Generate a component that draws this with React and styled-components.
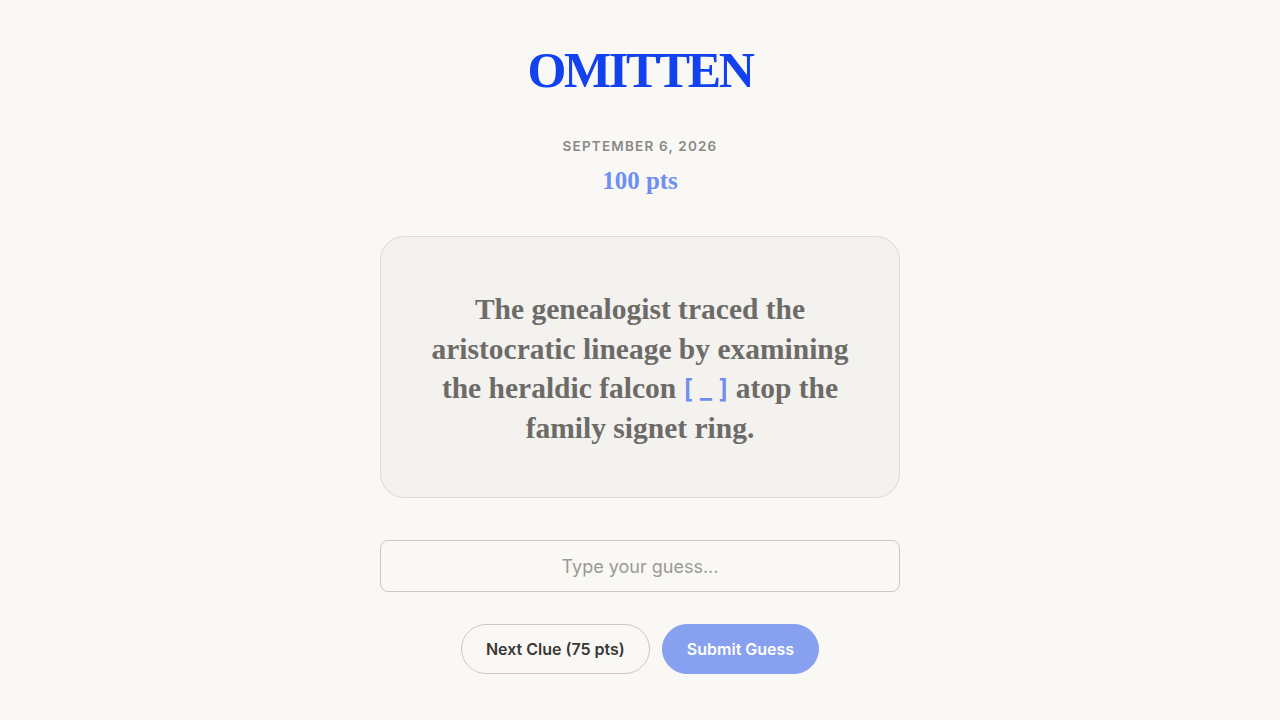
import styled, { createGlobalStyle } from 'styled-components';

const GlobalStyle = createGlobalStyle`
  html, body {
    margin: 0;
    padding: 0;
    background: #f9f8f5;
  }
  body {
    font-family: Inter, 'Liberation Sans', sans-serif;
  }
`;

const Page = styled.main`
  min-height: 100vh;
  display: flex;
  flex-direction: column;
  align-items: center;
  padding-top: 40px;
  box-sizing: border-box;
`;

const Logo = styled.h1`
  margin: 0;
  font-family: 'Liberation Serif', 'DejaVu Serif', serif;
  font-weight: 700;
  font-size: 50px;
  line-height: 60px;
  color: #1242ef;
  letter-spacing: -2.4px;
`;

const DateLine = styled.div`
  margin-top: 38px;
  font-size: 13.5px;
  font-weight: 600;
  letter-spacing: 1.2px;
  color: #8a8986;
  text-transform: uppercase;
`;

const Points = styled.div`
  margin-top: 12px;
  font-family: 'Liberation Serif', 'DejaVu Serif', serif;
  font-size: 25px;
  font-weight: 700;
  line-height: 30px;
  color: #6f8ff0;
`;

const ClueCard = styled.section`
  margin-top: 40px;
  width: 520px;
  height: 262px;
  box-sizing: border-box;
  padding: 4px 44px 0;
  display: flex;
  align-items: center;
  justify-content: center;
  background: #f3f2ef;
  border: 1px solid #dcdad5;
  border-radius: 24px;
`;

const ClueText = styled.p`
  margin: 0;
  text-align: center;
  font-family: 'Liberation Serif', 'DejaVu Serif', serif;
  font-weight: 700;
  font-size: 29.5px;
  line-height: 39.5px;
  color: #6d6b68;
`;

const Blank = styled.span`
  font-family: Inter, 'Liberation Sans', sans-serif;
  font-weight: 600;
  font-size: 26px;
  color: #6f8ff0;
`;

const GuessInput = styled.input`
  margin-top: 42px;
  width: 520px;
  height: 52px;
  box-sizing: border-box;
  border: 1px solid #cac8c4;
  border-radius: 8px;
  background: transparent;
  text-align: center;
  font-family: Inter, 'Liberation Sans', sans-serif;
  font-size: 18px;
  color: #444;
  outline: none;

  &::placeholder {
    color: #9a9996;
  }
`;

const Actions = styled.div`
  margin-top: 32px;
  display: flex;
  gap: 12px;
`;

const PillButton = styled.button`
  height: 50px;
  padding: 0 24px;
  border-radius: 25px;
  font-family: Inter, 'Liberation Sans', sans-serif;
  font-size: 16px;
  font-weight: 600;
  cursor: pointer;
  border: 1px solid ${(p) => (p.$primary ? '#87a0f0' : '#cac8c4')};
  background: ${(p) => (p.$primary ? '#87a0f0' : 'transparent')};
  color: ${(p) => (p.$primary ? '#ffffff' : '#3a3936')};
`;

export default function App() {
  return (
    <>
      <GlobalStyle />
      <Page>
        <Logo>OMITTEN</Logo>
        <DateLine>September 6, 2026</DateLine>
        <Points>100 pts</Points>
        <ClueCard>
          <ClueText>
            The genealogist traced the aristocratic lineage by examining the
            heraldic falcon <Blank>[&nbsp;_&nbsp;]</Blank> atop the family signet ring.
          </ClueText>
        </ClueCard>
        <GuessInput placeholder="Type your guess..." />
        <Actions>
          <PillButton>Next Clue (75 pts)</PillButton>
          <PillButton $primary>Submit Guess</PillButton>
        </Actions>
      </Page>
    </>
  );
}
